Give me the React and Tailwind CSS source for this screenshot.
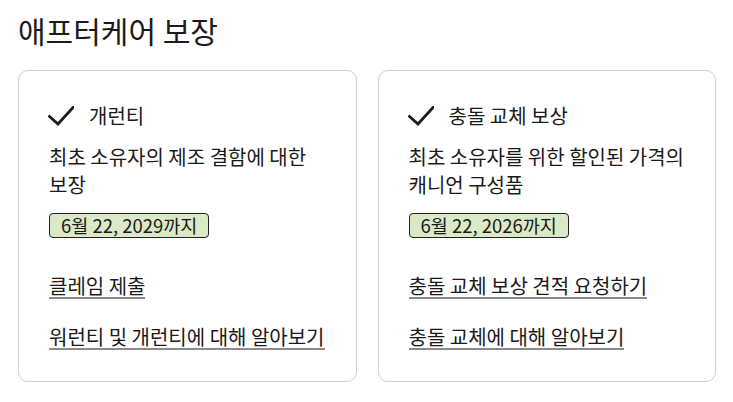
const cards = [
  {
    title: '개런티',
    desc: '최초 소유자의 제조 결함에 대한 보장',
    until: '6월 22, 2029까지',
    links: ['클레임 제출', '워런티 및 개런티에 대해 알아보기'],
  },
  {
    title: '충돌 교체 보상',
    desc: '최초 소유자를 위한 할인된 가격의 캐니언 구성품',
    until: '6월 22, 2026까지',
    links: ['충돌 교체 보상 견적 요청하기', '충돌 교체에 대해 알아보기'],
  },
];

const CheckMark = () => (
  <svg width="26" height="20" viewBox="0 0 26 20" fill="none" className="mr-[15px] -ml-[1px] shrink-0">
    <path d="M1.5 10.5 10 18 25 1.5" stroke="#1a1a1a" strokeWidth="2.8" strokeLinecap="square" />
  </svg>
);

const App = () => {
  return (
    <div
      className="w-[733px] h-[402px] bg-white text-[#1a1a1a] pl-[18px] pr-[17px] pt-[12px]"
      style={{ fontFamily: '"Noto Sans CJK KR", "Noto Sans", sans-serif' }}
    >
      <h1 className="text-[30px] leading-[36px] font-normal">애프터케어 보장</h1>

      <div className="grid grid-cols-2 gap-[21px] mt-[22px]">
        {cards.map((card) => (
          <div key={card.title} className="border border-[#cfcfcf] rounded-[10px] px-[30px] pt-[33px] pb-[31px]">
            <div className="flex items-center h-6">
              <CheckMark />
              <span className="text-[20px] leading-6">{card.title}</span>
            </div>
            <p className="text-[20px] leading-[28px] mt-[15px]">{card.desc}</p>
            <div className="mt-[14px]">
              <span className="inline-block bg-[#dbeac6] border border-[#222] rounded-[4px] px-[11px] text-[18.5px] leading-[23px]">
                {card.until}
              </span>
            </div>
            <div className="flex flex-col items-start mt-[36px] gap-[26px]">
              {card.links.map((l) => (
                <a key={l} href="#" className="text-[20px] leading-[23px] border-b-2 border-[#8a8a8a]">
                  {l}
                </a>
              ))}
            </div>
          </div>
        ))}
      </div>
    </div>
  );
};

export default App;
